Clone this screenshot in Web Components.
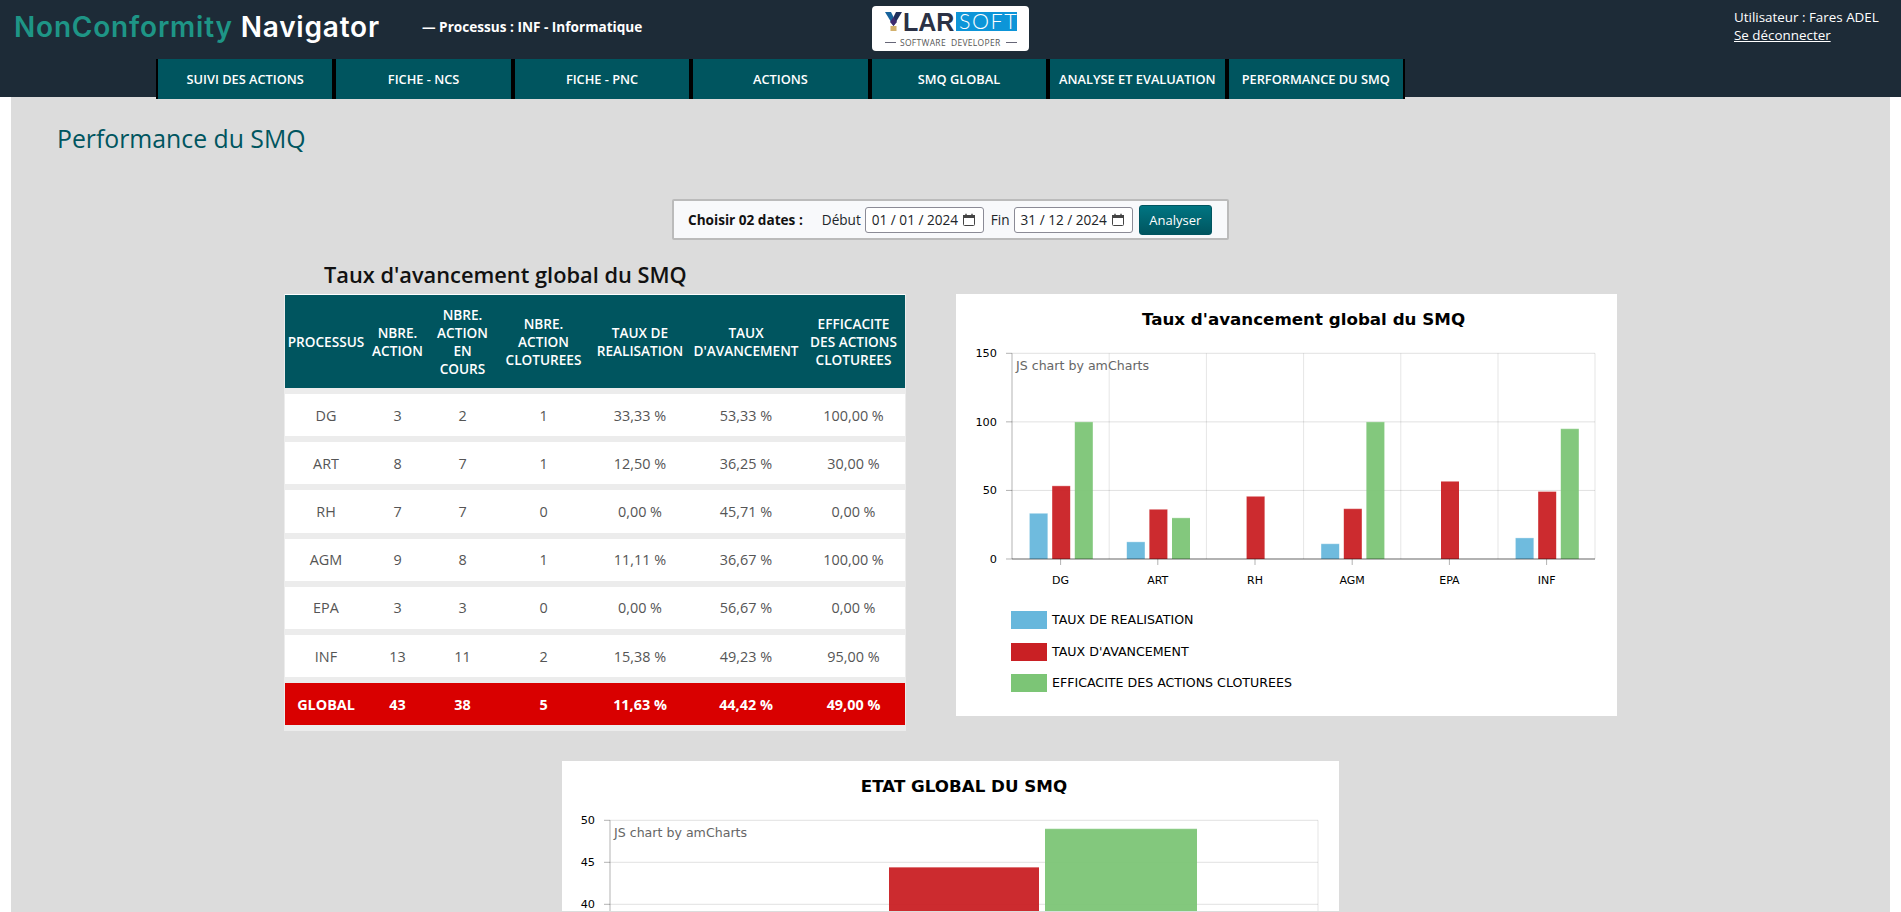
<!DOCTYPE html>
<html lang="fr">
<head>
<meta charset="utf-8">
<title>Performance du SMQ</title>
<style>
    html, body { margin: 0; height: 912px; overflow: hidden; background: #fff; }
    body { font-family: "Open Sans", "Noto Sans", sans-serif; }
</style>
</head>
<body>

<app-header>
    <nav-item>SUIVI DES ACTIONS</nav-item>
    <nav-item>FICHE - NCS</nav-item>
    <nav-item>FICHE - PNC</nav-item>
    <nav-item>ACTIONS</nav-item>
    <nav-item>SMQ GLOBAL</nav-item>
    <nav-item>ANALYSE ET EVALUATION</nav-item>
    <nav-item>PERFORMANCE DU SMQ</nav-item>
</app-header>

<page-main heading="Performance du SMQ">
    <date-filter>
        <date-field label="Début" value="01 / 01 / 2024"></date-field>
        <date-field label="Fin" value="31 / 12 / 2024"></date-field>
    </date-filter>

    <section-row>
        <kpi-table heading="Taux d'avancement global du SMQ">
            <kpi-row head>
                <span>PROCESSUS</span><span>NBRE.<br>ACTION</span><span>NBRE.<br>ACTION<br>EN<br>COURS</span><span>NBRE.<br>ACTION<br>CLOTUREES</span><span>TAUX DE<br>REALISATION</span><span>TAUX<br>D'AVANCEMENT</span><span>EFFICACITE<br>DES ACTIONS<br>CLOTUREES</span>
            </kpi-row>
            <kpi-row><span>DG</span><span>3</span><span>2</span><span>1</span><span>33,33 %</span><span>53,33 %</span><span>100,00 %</span></kpi-row>
            <kpi-row><span>ART</span><span>8</span><span>7</span><span>1</span><span>12,50 %</span><span>36,25 %</span><span>30,00 %</span></kpi-row>
            <kpi-row><span>RH</span><span>7</span><span>7</span><span>0</span><span>0,00 %</span><span>45,71 %</span><span>0,00 %</span></kpi-row>
            <kpi-row><span>AGM</span><span>9</span><span>8</span><span>1</span><span>11,11 %</span><span>36,67 %</span><span>100,00 %</span></kpi-row>
            <kpi-row><span>EPA</span><span>3</span><span>3</span><span>0</span><span>0,00 %</span><span>56,67 %</span><span>0,00 %</span></kpi-row>
            <kpi-row><span>INF</span><span>13</span><span>11</span><span>2</span><span>15,38 %</span><span>49,23 %</span><span>95,00 %</span></kpi-row>
            <kpi-row total><span>GLOBAL</span><span>43</span><span>38</span><span>5</span><span>11,63 %</span><span>44,42 %</span><span>49,00 %</span></kpi-row>
        </kpi-table>
        <amchart-avancement></amchart-avancement>
    </section-row>

    <amchart-etat></amchart-etat>
</page-main>

<script>
const BLUE = '#67b7dc', RED = '#c92024', GREEN = '#7cc576';

class AppHeader extends HTMLElement {
    constructor() {
        super();
        this.attachShadow({ mode: 'open' });
        this.shadowRoot.innerHTML = `
            <style>
                :host { display: block; height: 97px; background: #1d2b37; color: #fff; position: relative; z-index: 1; }
                .top { height: 59px; display: flex; position: relative; }
                .brand { margin: 8px 0 0 14px; width: 408px; font: 600 28px/38px Inter, sans-serif; letter-spacing: .8px; white-space: nowrap; }
                .brand span { color: #1e9586; }
                .proc { margin-top: 17px; width: 450px; font-size: 13.6px; font-weight: 700; line-height: 20px; white-space: nowrap; }
                .user { position: absolute; left: 1734px; top: 8px; font-size: 13.4px; line-height: 18px; }
                .user a { color: #fff; display: block; }
                nav { display: flex; margin-left: 156px; width: 1249px; height: 40px; }
                ::slotted(nav-item) { flex: 1; }
            </style>
            <div class="top">
                <div class="brand"><span>NonConformity</span> Navigator</div>
                <div class="proc">— Processus : INF - Informatique</div>
                <ylar-logo></ylar-logo>
                <div class="user">Utilisateur : Fares ADEL<a href="#">Se déconnecter</a></div>
            </div>
            <nav><slot></slot></nav>
        `;
    }
}

class YlarLogo extends HTMLElement {
    constructor() {
        super();
        this.attachShadow({ mode: 'open' });
        this.shadowRoot.innerHTML = `
            <style>
                :host { display: block; width: 157px; height: 45px; margin-top: 6px; }
                svg { display: block; }
            </style>
            <svg width="157" height="45" viewBox="0 0 157 45">
                <rect width="157" height="45" rx="4" fill="#fff"/>
                <polygon points="13,6 19,6 21.5,11 21.5,20" fill="#17639c"/>
                <polygon points="30,6 24,6 21.5,11 21.5,20" fill="#1e2f5c"/>
                <polygon points="18,16 21.5,11 25,16 21.5,20" fill="#3d2b70"/>
                <rect x="18.5" y="20" width="6" height="5" fill="#d2b06c"/>
                <text x="31" y="25" font-family="Liberation Sans" font-weight="700" font-size="25" fill="#2a3145">LAR</text>
                <rect x="84" y="6" width="61" height="19" fill="#0d95d8"/>
                <text x="87" y="23" font-family="Lato" font-weight="300" font-size="21.5" letter-spacing="1.5" fill="#fff">SOFT</text>
                <line x1="13" y1="36.5" x2="24" y2="36.5" stroke="#667" stroke-width="1"/>
                <line x1="134" y1="36.5" x2="145" y2="36.5" stroke="#667" stroke-width="1"/>
                <text x="28" y="39.5" font-family="Open Sans" font-size="8.5" letter-spacing=".3" fill="#555" style="white-space:pre">SOFTWARE  DEVELOPER</text>
            </svg>
        `;
    }
}

class NavItem extends HTMLElement {
    constructor() {
        super();
        this.attachShadow({ mode: 'open' });
        this.shadowRoot.innerHTML = `
            <style>
                :host { display: flex; align-items: center; justify-content: center; height: 40px; box-sizing: border-box;
                    background: #00555f; border: solid #000; border-width: 0 2px; color: #fff;
                    font-size: 12.8px; font-weight: 600; white-space: nowrap; cursor: pointer; }
            </style>
            <slot></slot>
        `;
    }
}

class PageMain extends HTMLElement {
    constructor() {
        super();
        this.attachShadow({ mode: 'open' });
        this.shadowRoot.innerHTML = `
            <style>
                :host { display: block; margin: 0 11px; background: #dcdcdc; height: 815px; overflow: hidden; }
                h1 { margin: 24px 0 0 46px; font-size: 24.8px; font-weight: 400; line-height: 34px; color: #00555f; }
            </style>
            <h1></h1>
            <slot></slot>
        `;
        this.shadowRoot.querySelector('h1').textContent = this.getAttribute('heading');
    }
}

class DateFilter extends HTMLElement {
    constructor() {
        super();
        this.attachShadow({ mode: 'open' });
        this.shadowRoot.innerHTML = `
            <style>
                :host { display: flex; justify-content: center; margin-top: 44px; font-size: 13.6px; color: #212529; }
                .box { display: flex; align-items: center; width: 557px; height: 41px; box-sizing: border-box;
                    background: #f8f9fb; border: 2px solid #bbb; border-radius: 2px; padding: 0 15px 0 14px; }
                b { font-weight: 700; color: #111; margin-right: 19px; white-space: nowrap; }
                button { margin-left: 6px; width: 74px; height: 30px; padding: 0; border: 1px solid #005560; border-radius: 3px;
                    background: linear-gradient(#007582, #00555f); color: #fff; font: inherit; font-size: 13px; }
            </style>
            <div class="box">
                <b>Choisir 02 dates :</b>
                <slot></slot>
                <button type="button">Analyser</button>
            </div>
        `;
    }
}

class DateField extends HTMLElement {
    constructor() {
        super();
        this.attachShadow({ mode: 'open' });
        this.shadowRoot.innerHTML = `
            <style>
                :host { display: flex; align-items: center; margin-right: 7px; white-space: nowrap; }
                :host(:last-of-type) { margin-right: 0; }
                .input { display: flex; align-items: center; justify-content: space-between; margin-left: 4px; width: 119px; height: 26px;
                    box-sizing: border-box; padding: 0 7px 0 6px; background: #fff; border: 1px solid #8b8b96; border-radius: 3px; }
                svg { display: block; }
            </style>
            <span class="label"></span>
            <div class="input">
                <span class="value"></span>
                <svg width="14" height="14" viewBox="0 0 14 14" fill="none" stroke="#444" stroke-width="1">
                    <rect x="1.5" y="2.5" width="11" height="10" rx="1"/>
                    <rect x="1.5" y="2.5" width="11" height="2" fill="#444"/>
                    <path d="M4 .8v2.4M10 .8v2.4" stroke-width="1.4"/>
                </svg>
            </div>
        `;
        this.shadowRoot.querySelector('.label').textContent = this.getAttribute('label');
        this.shadowRoot.querySelector('.value').textContent = this.getAttribute('value');
    }
}

class SectionRow extends HTMLElement {
    constructor() {
        super();
        this.attachShadow({ mode: 'open' });
        this.shadowRoot.innerHTML = `
            <style>
                :host { display: flex; justify-content: center; align-items: flex-start; gap: 50px; margin-top: 23px; }
            </style>
            <slot></slot>
        `;
    }
}

class KpiTable extends HTMLElement {
    constructor() {
        super();
        this.attachShadow({ mode: 'open' });
        this.shadowRoot.innerHTML = `
            <style>
                :host { display: block; width: 622px; }
                h2 { margin: 0 0 3px 40px; font-size: 21.8px; font-weight: 600; line-height: 28px; color: #111; white-space: nowrap; position: relative; top: -2px; }
                .rows { display: grid; gap: 6px; background: #ececec; padding: 0 1px 6px; }
            </style>
            <h2></h2>
            <div class="rows"><slot></slot></div>
        `;
        this.shadowRoot.querySelector('h2').textContent = this.getAttribute('heading');
    }
}

class KpiRow extends HTMLElement {
    constructor() {
        super();
        this.attachShadow({ mode: 'open' });
        this.shadowRoot.innerHTML = `
            <style>
                :host { display: grid; grid-template-columns: 82px 61px 69px 93px 100px 112px 103px; align-items: center;
                    height: 42.2px; background: #fff; color: #555; font-size: 14.4px; text-align: center; }
                :host([head]) { height: 94px; box-sizing: border-box; border-top: 1px solid #fff; background: #00555f;
                    color: #fff; font-size: 13.6px; font-weight: 600; line-height: 18px; }
                :host([total]) { background: #d90000; color: #fff; font-weight: 700; }
                ::slotted(span) { white-space: nowrap; }
            </style>
            <slot></slot>
        `;
    }
}

// Draws a column chart on the same coordinates the card has on screen
class ColumnChart extends HTMLElement {
    config() { return {}; }

    constructor() {
        super();
        this.attachShadow({ mode: 'open' });
        const c = this.config();
        const top = 59.3, scale = c.scale, bottom = top + c.max * scale;
        const yOf = v => top + (c.max - v) * scale;
        let s = '';

        c.ticks.forEach(v => {
            const y = yOf(v);
            s += `<line x1="${c.left}" x2="${c.right}" y1="${y}" y2="${y}" stroke="#000" stroke-opacity=".12"/>`;
            s += `<line x1="${c.left - 6}" x2="${c.left}" y1="${y}" y2="${y}" stroke="#000" stroke-opacity=".3"/>`;
            s += `<text x="${c.left - 15}" y="${y + 4}" text-anchor="end" font-size="11.3">${v}</text>`;
        });
        (c.vlines || []).forEach(x => {
            s += `<line x1="${x}" x2="${x}" y1="${top}" y2="${bottom}" stroke="#000" stroke-opacity=".1"/>`;
        });
        s += `<line x1="${c.right}" x2="${c.right}" y1="${top}" y2="${bottom}" stroke="#000" stroke-opacity=".1"/>`;

        c.bars.forEach(b => {
            const y = yOf(b.v);
            s += `<rect x="${b.x}" y="${y}" width="${b.w}" height="${bottom - y}" fill="${b.c}" fill-opacity=".95"/>`;
            s += `<line x1="${b.x}" x2="${b.x + b.w}" y1="${y}" y2="${y}" stroke="#fff" stroke-opacity=".35"/>`;
        });

        s += `<line x1="${c.left}" x2="${c.left}" y1="${top}" y2="${bottom}" stroke="#000" stroke-opacity=".3"/>`;
        s += `<line x1="${c.left}" x2="${c.right}" y1="${bottom}" y2="${bottom}" stroke="#000" stroke-opacity=".35" stroke-width="1.5"/>`;
        s += `<text x="${c.left + 4}" y="76" fill="#666" font-size="12.6">JS chart by amCharts</text>`;
        s += `<text x="${(c.left + c.right) / 2}" y="31" text-anchor="middle" font-size="16.7" font-weight="700">${c.title}</text>`;
        s += c.extra ? c.extra(bottom) : '';

        this.shadowRoot.innerHTML = `
            <style>
                :host { display: block; width: ${c.width}px; height: ${c.height}px; background: #fff; }
                svg { display: block; font-family: "DejaVu Sans", Verdana, sans-serif; font-size: 11px; fill: #000; }
            </style>
            <svg width="${c.width}" height="${c.height}" viewBox="0 0 ${c.width} ${c.height}">${s}</svg>
        `;
    }
}

class AmChartAvancement extends ColumnChart {
    config() {
        const left = 56, step = 97.2;
        const rows = [['DG', 33.33, 53.33, 100], ['ART', 12.5, 36.25, 30], ['RH', 0, 45.71, 0],
            ['AGM', 11.11, 36.67, 100], ['EPA', 0, 56.67, 0], ['INF', 15.38, 49.23, 95]];
        const bars = [], labels = [];
        rows.forEach((r, i) => {
            const cx = left + step * (i + .5);
            [BLUE, RED, GREEN].forEach((col, k) => {
                if (r[k + 1] > 0) bars.push({ x: cx - 31 + k * 22.6, w: 18, v: r[k + 1], c: col });
            });
            labels.push([cx, r[0]]);
        });
        const legend = [[BLUE, 'TAUX DE REALISATION', 335], [RED, "TAUX D'AVANCEMENT", 367], [GREEN, 'EFFICACITE DES ACTIONS CLOTUREES', 398]];
        return {
            title: "Taux d'avancement global du SMQ",
            width: 661, height: 422, left, right: 639, max: 150, scale: 1.3713,
            ticks: [150, 100, 50, 0],
            vlines: [1, 2, 3, 4, 5].map(i => left + step * i),
            bars,
            extra: bottom => {
                let s = '';
                labels.forEach(([x, t]) => {
                    s += `<line x1="${x}" x2="${x}" y1="${bottom}" y2="${bottom + 6}" stroke="#000" stroke-opacity=".3"/>`;
                    s += `<text x="${x}" y="${bottom + 25}" text-anchor="middle">${t}</text>`;
                });
                legend.forEach(([col, t, y]) => {
                    s += `<rect x="55" y="${y - 18}" width="36" height="18" fill="${col}"/>`;
                    s += `<text x="96" y="${y - 5}" font-size="12.6">${t}</text>`;
                });
                return s;
            }
        };
    }
    connectedCallback() {
        this.style.marginTop = '31px';
    }
}

class AmChartEtat extends ColumnChart {
    config() {
        return {
            title: 'ETAT GLOBAL DU SMQ',
            width: 777, height: 150, left: 48, right: 756, max: 50, scale: 8.4,
            ticks: [50, 45, 40],
            bars: [{ x: 327, w: 150, v: 44.42, c: RED }, { x: 483, w: 152, v: 49, c: GREEN }]
        };
    }
    connectedCallback() {
        this.style.margin = '30px auto 0';
    }
}

customElements.define('ylar-logo', YlarLogo);
customElements.define('app-header', AppHeader);
customElements.define('nav-item', NavItem);
customElements.define('page-main', PageMain);
customElements.define('date-filter', DateFilter);
customElements.define('date-field', DateField);
customElements.define('section-row', SectionRow);
customElements.define('kpi-table', KpiTable);
customElements.define('kpi-row', KpiRow);
customElements.define('amchart-avancement', AmChartAvancement);
customElements.define('amchart-etat', AmChartEtat);
</script>
</body>
</html>
